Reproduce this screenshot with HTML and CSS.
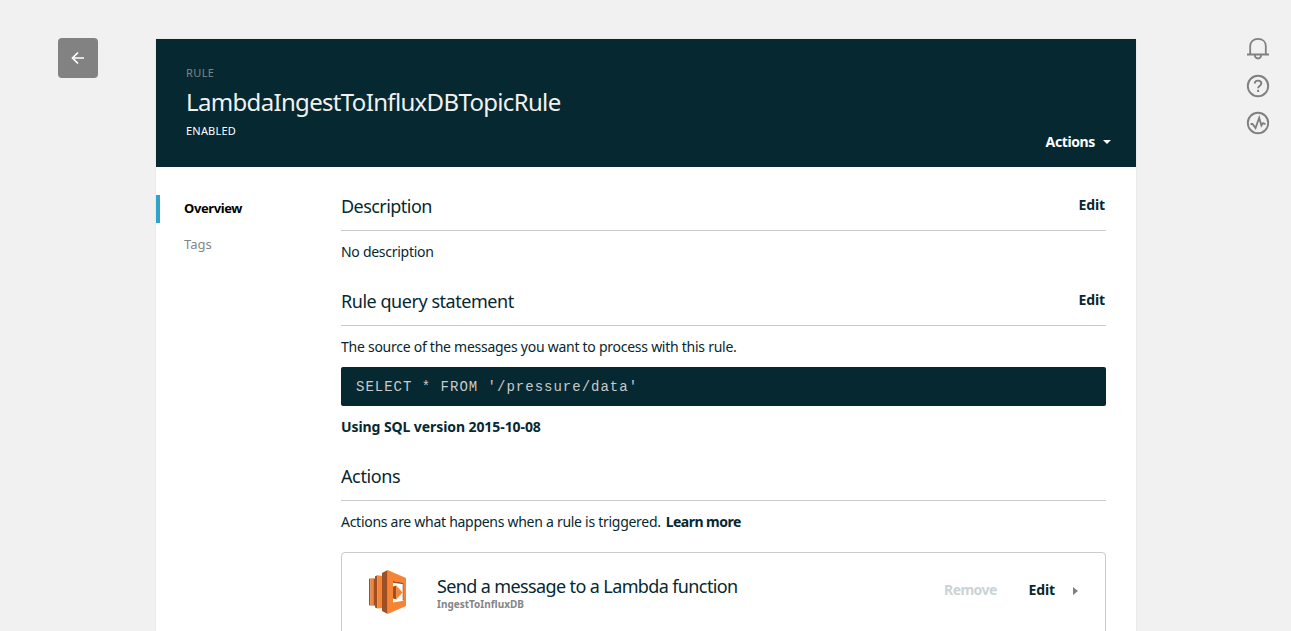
FILE: index.html
```html
<!DOCTYPE html>
<html lang="en">
<head>
<meta charset="utf-8">
<title>LambdaIngestToInfluxDBTopicRule</title>
<link rel="stylesheet" href="styles.css">
</head>
<body>
<div class="page">
  <button class="back" aria-label="Back">
    <svg width="14" height="14" viewBox="0 0 14 14"><path d="M13 7H2M7 1.500 1.500 7 7 12.500" fill="none" stroke="#fff" stroke-width="1.700"/></svg>
  </button>
  <main class="panel">
    <header class="hero">
      <div class="hero-kind">RULE</div>
      <h1 class="hero-title">LambdaIngestToInfluxDBTopicRule</h1>
      <div class="hero-foot">
        <span class="hero-status">ENABLED</span>
        <button class="hero-actions"><span>Actions</span><i class="caret-down"></i></button>
      </div>
    </header>
    <div class="body">
      <nav class="nav">
        <a class="nav-item active">Overview</a>
        <a class="nav-item">Tags</a>
      </nav>
      <div class="content">
        <section class="section">
          <div class="section-head"><h2 class="t-description">Description</h2><a class="link edit">Edit</a></div>
          <p class="text">No description</p>
        </section>
        <section class="section query">
          <div class="section-head"><h2>Rule query statement</h2><a class="link edit">Edit</a></div>
          <p class="text t-source">The source of the messages you want to process with this rule.</p>
          <pre class="sql">SELECT * FROM '/pressure/data'</pre>
          <p class="version">Using SQL version 2015-10-08</p>
        </section>
        <section class="section">
          <div class="section-head"><h2 class="t-actions">Actions</h2></div>
          <p class="text">Actions are what happens when a rule is triggered.<a class="link learn">Learn more</a></p>
          <div class="card">
            <svg class="lambda" width="40" height="46" viewBox="0 0 40 46">
              <path d="M1 10 2.500 9.300v27.400L1 36z" fill="#9d5025"/><path d="M2.500 9.300H6v27.400H2.500z" fill="#f58534"/>
              <path d="M5.800 9.500h1.400v27H5.800z" fill="#9d5025"/>
              <path d="M7 7.200 9.500 6.300v33.200L7 38.500z" fill="#9d5025"/><path d="M9.500 6.300 14.300 7v32l-4.800.5z" fill="#f58534"/>
              <path d="M14 4 19.700 1v44L14 42z" fill="#9d5025"/>
              <path fill-rule="evenodd" d="M19.500 1 38 9v28L19.500 45zM25 12v21.500l10.700-1.800V13.800z" fill="#f58534"/>
              <path d="M25 12 35.700 13.800v1.500L25 13.800zM34.700 14h1v17.500h-1z" fill="#9d5025"/>
              <path d="M25 17.500 28.500 16.500v14L25 29.500z" fill="#9d5025"/><path d="M28.300 16.500 34.500 23.500 28.300 30.500z" fill="#f58534"/>
            </svg>
            <div class="card-text">
              <div class="card-title">Send a message to a Lambda function</div>
              <div class="card-sub">IngestToInfluxDB</div>
            </div>
            <a class="link remove">Remove</a>
            <a class="link edit card-edit">Edit</a>
            <i class="caret-right"></i>
          </div>
        </section>
      </div>
    </div>
  </main>
  <aside class="tools">
    <svg width="24" height="24" viewBox="0 0 24 24" fill="none" stroke="#808080" stroke-width="1.800"><path d="M1 17.500h22M4.200 17.500V9C4.200 4.600 7.500 1.900 12 1.900s7.800 2.700 7.800 7.100v8.500M8.800 18c.2 2.400 1.500 3.500 3.200 3.500s3-1.100 3.200-3.500"/></svg>
    <svg width="24" height="24" viewBox="0 0 24 24" fill="none" stroke="#808080" stroke-width="1.900"><circle cx="12" cy="12" r="10.200"/><path d="M8.800 9.600C8.800 7.600 10 6.600 12 6.600s3.300 1.100 3.300 2.800c0 2.200-3.200 2.500-3.200 4.900M12.100 15.800v2.100"/></svg>
    <svg width="24" height="24" viewBox="0 0 24 24" fill="none" stroke="#808080" stroke-width="1.900"><circle cx="12" cy="12" r="10.200"/><path d="M4.500 13h2l3 4L13.200 6.800l2.200 7.700 1.600-2.300 2.500 1"/></svg>
  </aside>
</div>
</body>
</html>
```
FILE: styles.css
```css
* { box-sizing: border-box; }
html, body { height: 100%; }
body { margin: 0; overflow: hidden; background: #f1f1f1; color: #062830; font-family: "Noto Sans", "Open Sans", sans-serif; }
h1, h2, p, pre { margin: 0; font-weight: 400; }
button { border: 0; padding: 0; font: inherit; }
.page { display: flex; align-items: flex-start; height: 631px; overflow: hidden; }
.back { display: flex; align-items: center; justify-content: center; width: 40px; height: 40px; margin: 38px 58px 0; border-radius: 4px; background: #828282; }
.panel { width: 980px; height: 640px; margin-top: 39px; background: #fff; box-shadow: 0 0 2px rgba(0, 0, 0, .08); flex: none; }
.hero { height: 128px; padding: 27px 25px 0 30px; background: #062830; color: #fff; }
.hero-kind { height: 14px; font-size: 11px; line-height: 14px; letter-spacing: .4px; color: #808584; }
.hero-title { height: 34px; margin-top: 5px; font-size: 24px; line-height: 34px; letter-spacing: -.67px; white-space: nowrap; color: #f1f1f1; }
.hero-foot { display: flex; justify-content: space-between; }
.hero-status { margin-top: 5px; font-size: 11px; line-height: 14px; letter-spacing: .2px; }
.hero-actions { display: flex; align-items: center; gap: 8px; height: 20px; margin-top: 12px; background: none; color: #fff; font-size: 14px; font-weight: 700; letter-spacing: -.38px; }
.caret-down { margin-top: 1px; border: 4px solid transparent; border-top-color: #fff; border-bottom: 0; }
.body { display: flex; padding-top: 28px; }
.nav { width: 185px; }
.nav-item { display: block; height: 28px; margin-bottom: 8px; padding-left: 24px; border-left: 4px solid transparent; font-size: 13px; line-height: 26px; color: #858585; }
.nav-item.active { border-color: #30a3c9; color: #000; font-weight: 700; letter-spacing: -.4px; }
.content { width: 765px; }
.section { height: 95px; }
.section.query { height: 175px; }
.section-head { display: flex; justify-content: space-between; height: 36px; border-bottom: 1px solid #c9caca; }
h2 { font-size: 18px; line-height: 22px; letter-spacing: -.46px; white-space: nowrap; }
.t-description { letter-spacing: -.55px; }
.t-actions { letter-spacing: -.38px; }
.link { font-size: 14px; font-weight: 700; line-height: 20px; letter-spacing: -.1px; }
.section-head .edit { padding-right: 1px; }
.text { height: 20px; margin-top: 11px; font-size: 14px; line-height: 20px; letter-spacing: -.28px; white-space: nowrap; }
.t-source { letter-spacing: -.26px; }
.sql { height: 39px; margin-top: 10px; padding-left: 15px; border-radius: 2px; background: #062830; color: #c9caca; font: 14px/41px "Courier New", "Liberation Mono", monospace; letter-spacing: 1px; }
.version { margin-top: 11px; font-size: 14px; font-weight: 700; line-height: 20px; letter-spacing: -.08px; }
.learn { margin-left: 5px; letter-spacing: -.53px; }
.card { display: flex; height: 100px; margin-top: 20px; padding: 16px 26px 0; border: 1px solid #c9caca; border-radius: 4px; }
.card-text { width: 507px; margin-left: 29px; padding-top: 5px; white-space: nowrap; }
.card-title { height: 24px; font-size: 18px; line-height: 25px; letter-spacing: -.62px; }
.card-sub { font-size: 10px; font-weight: 700; line-height: 12px; color: #858585; }
.remove { width: 84.5px; margin-top: 11px; letter-spacing: -.55px; color: #ccd3d4; }
.card-edit { width: 44.5px; margin-top: 11px; }
.caret-right { height: 8px; margin-top: 18px; border: 4px solid transparent; border-left: 5px solid #808080; border-right: 0; }
.tools { display: flex; flex-direction: column; gap: 13px; margin: 37px 0 0 110px; }
.tools svg { display: block; }
```
